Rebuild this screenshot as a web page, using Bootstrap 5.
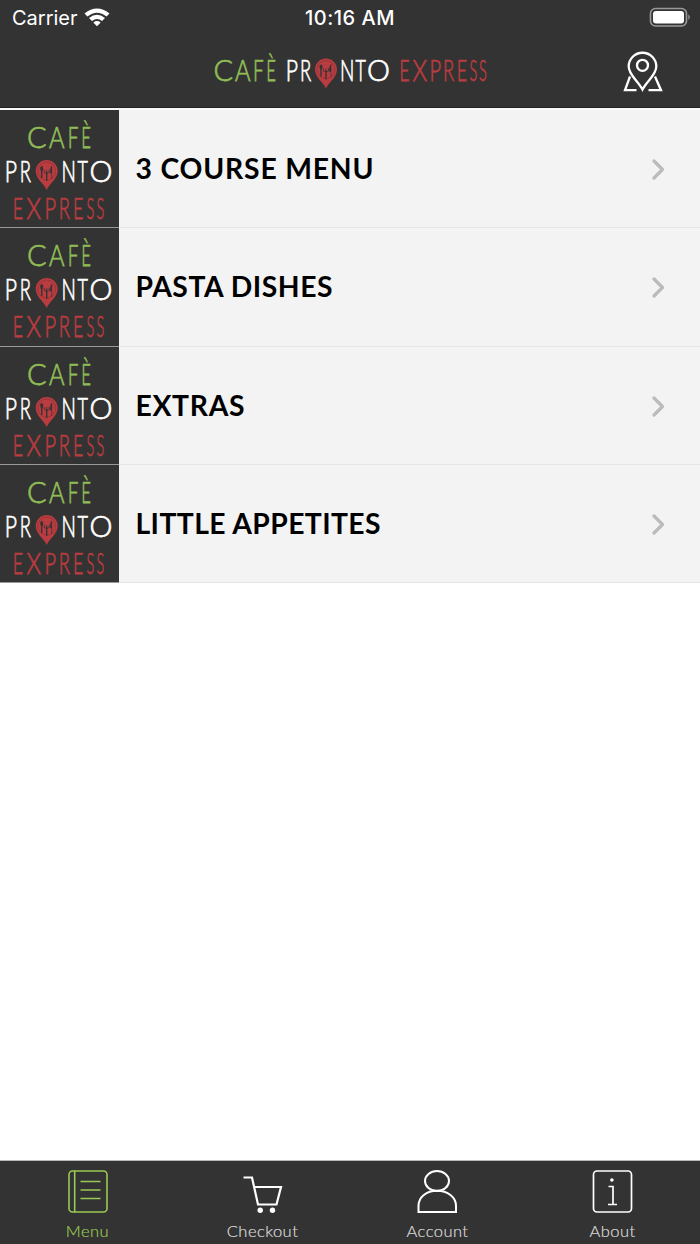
<!DOCTYPE html>
<html lang="en">
<head>
<meta charset="utf-8">
<meta name="viewport" content="width=device-width, initial-scale=1">
<title>Cafè Pronto Express</title>
<link href="https://cdn.jsdelivr.net/npm/bootstrap@5.3.0/dist/css/bootstrap.min.css" rel="stylesheet">
<style>
body{font-family:Lato,sans-serif;background:#fff;overflow:hidden}
.app-dark{background:#333}
.status-bar{height:36px;font-family:Inter,sans-serif;font-size:20px;line-height:36px;color:#fff}
.clock{letter-spacing:.5px}
.carrier{padding-left:12px;margin-right:6px}
.top-bar{height:110px;border-bottom:2px solid #f8f8f8;box-shadow:inset 0 -1px #222}
.title-row{height:72px}
.side{width:214px}
.logo{overflow:visible}
.logo text{font-family:Lato,sans-serif;font-weight:300;font-size:29px;stroke-width:.75}
.cafe{fill:#8fbc55;stroke:#8fbc55}
.pronto{fill:#fff;stroke:#fff}
.express{fill:#b93c40;stroke:#b93c40}
.menu-item{height:118.25px;background:#f3f3f3;border:0;border-radius:0;box-shadow:inset 0 -1px #e6e6e6;color:#000}
.thumb{width:118.5px;height:118.25px;box-shadow:inset 0 -1px #999}
.thumb svg{display:block}
.item-name{font-size:28.3px;font-weight:700;line-height:34px;padding:0 0 2px 17px;white-space:nowrap}
.tab-bar{height:84px;border-top:1px solid #b5bab7}
.tab{color:#ddd;font-size:16.5px;font-weight:300;letter-spacing:.45px;line-height:20px;padding-top:7px;text-decoration:none;-webkit-text-stroke:.2px}
.tab svg{display:block;color:#fff;margin-bottom:7px}
.tab.current,.tab.current svg{color:#9ac953}
</style>
</head>
<body>
<div class="d-flex flex-column vh-100">
<header class="top-bar app-dark flex-shrink-0">
  <div class="status-bar d-flex justify-content-between">
    <div class="side d-flex align-items-center"><span class="carrier">Carrier</span>
      <svg width="26" height="20" viewBox="0 0 26 20" fill="#fff"><path d="M.5 5.5Q13-4.5 25.500 5.500L22.600 8.500Q13 .8 3.400 8.500ZM5 10Q13 3.300 21 10L18 13Q13 8.800 8 13ZM9.300 14.400Q13 11.600 16.700 14.400L13 18.200Z"/></svg></div>
    <div class="fw-medium clock">10:16 AM</div>
    <div class="side d-flex justify-content-end align-items-center"><svg width="52" height="36" viewBox="0 0 52 36"><rect x="2.500" y="8.500" width="36" height="17.500" rx="5" fill="none" stroke="#999" stroke-width="1.600"/><rect x="5" y="11" width="31" height="12.500" rx="3" fill="#fff"/><path d="M40.300 14.300v5.600q3-2.800 0-5.600Z" fill="#999"/></svg></div>
  </div>
  <div class="title-row d-flex justify-content-between">
    <div class="side"></div>
    <svg class="logo" width="272" height="72" viewBox="214 36 272 72" data-words="214.5,80.500 288,80.500 401,80.500"></svg>
    <div class="side d-flex justify-content-end"><svg width="80" height="72" viewBox="620.5 36 80 72" fill="none" stroke="#fff" stroke-width="2.300"><path d="M643 89.500C638 80 629.200 75 629.200 66.500a13.800 13.800 0 0 1 27.600 0C656.800 75 648 80 643 89.500Z"/><circle cx="643" cy="65.300" r="5.500"/><path d="M630.500 76.500 625.500 90.200H637M655.500 76.500 661.500 90.200H649"/></svg></div>
  </div>
</header>
<main class="list-group list-group-flush flex-grow-1">
  <a class="menu-item d-flex align-items-center text-decoration-none" href="#"><div class="thumb app-dark"></div><span class="item-name flex-grow-1" data-w="235">3 COURSE MENU</span></a>
  <a class="menu-item d-flex align-items-center text-decoration-none" href="#"><div class="thumb app-dark"></div><span class="item-name flex-grow-1" data-w="195">PASTA DISHES</span></a>
  <a class="menu-item d-flex align-items-center text-decoration-none" href="#"><div class="thumb app-dark"></div><span class="item-name flex-grow-1" data-w="106">EXTRAS</span></a>
  <a class="menu-item d-flex align-items-center text-decoration-none" href="#"><div class="thumb app-dark"></div><span class="item-name flex-grow-1" data-w="243">LITTLE APPETITES</span></a>
</main>
<nav class="tab-bar app-dark d-flex flex-shrink-0">
  <a class="tab current col-3 d-flex flex-column align-items-center" href="#"><svg width="42" height="46" viewBox="0 0 42 46" fill="none" stroke="currentColor" stroke-width="1.600"><rect x="2" y="3" width="38" height="41" rx="3.500"/><path d="M7.700 3v41M13.500 13.500h20M13.500 22h20M13.500 30.500h20"/></svg><span>Menu</span></a>
  <a class="tab col-3 d-flex flex-column align-items-center" href="#"><svg width="42" height="46" viewBox="0 0 42 46" fill="none" stroke="currentColor" stroke-width="2.200"><path d="M1.500 9.500h8.500l6 27h18.500l4.500-17.500H12.500"/><g fill="currentColor" stroke="none"><circle cx="18.200" cy="42.300" r="2.700"/><circle cx="30.500" cy="42.300" r="2.700"/></g></svg><span>Checkout</span></a>
  <a class="tab col-3 d-flex flex-column align-items-center" href="#"><svg width="42" height="46" viewBox="0.5 0 42 46" fill="none" stroke="currentColor" stroke-width="2"><ellipse cx="20.500" cy="13" rx="12" ry="10"/><path d="M2 44V38C2 29 10 22.800 20.500 22.800S39.500 29 39.500 38v6Z"/></svg><span>Account</span></a>
  <a class="tab col-3 d-flex flex-column align-items-center" href="#"><svg width="42" height="46" viewBox="0 0 42 46" fill="none" stroke="currentColor" stroke-width="1.700"><rect x="1.500" y="3" width="38" height="41" rx="3.500"/><path d="M16.500 18.500h4.500v18M16 36.500h9"/><circle cx="19.900" cy="12" r="1.800" fill="currentColor" stroke="none"/></svg><span>About</span></a>
</nav>
</div>
<script src="https://cdn.jsdelivr.net/npm/bootstrap@5.3.0/dist/js/bootstrap.bundle.min.js"></script>
<script>
// Letter ink: [character, left edge, ink width], relative to the word's left edge.
const words=[
  ['cafe',[['C',0,18],['A',20.500,15.500],['F',40.500,8.500],['È',53.500,7.500]]],
  ['pronto',[['P',0,9.5],['R',14,9.5]]],
  ['pronto',[['N',54,10.500],['T',67.500,10.500],['O',80,21]]],
  ['express',[['E',0,8],['X',11.500,14.500],['P',30.500,9],['R',44,9.500],['E',57.500,8],['S',69,6.500],['S',78.500,6.500]]]
];
const ctx=document.createElement('canvas').getContext('2d');
function word([cls,letters],x,y,stretch=1){
  ctx.font='300 29px Lato';
  return `<text class="${cls}" y="${y}">`+letters.map(([c,l,w])=>{
    const m=ctx.measureText(c),ink=m.actualBoundingBoxRight+m.actualBoundingBoxLeft,k=w/ink;
    return `<tspan x="${(x+l*stretch+m.actualBoundingBoxLeft*k).toFixed(2)}" textLength="${(m.width*k).toFixed(2)}" lengthAdjust="spacingAndGlyphs">${c}</tspan>`;
  }).join('')+'</text>';
}
function pin(x,y,stretch=1){
  return `<g transform="translate(${x+38*stretch} ${y-10})"><path d="M0 18C-3 11-11 7-11-1A11 11 0 0 1 11-1C11 7 3 11 0 18Z" fill="#b93c40"/><circle cy="-1" r="9" fill="none" stroke="#8f3437" stroke-width=".8"/><g stroke="#333" fill="none" stroke-width="1.300"><path d="M-5-2V6M0 0V9"/><path d="M-2.500-2v2.500q2.500 2 5 0V-2M0-2v3" stroke-width=".8"/><path d="M5 7V-6Q3-3 3.500 1H5" fill="#333" stroke-width=".6"/><ellipse cx="-5" cy="-3.500" rx="1.500" ry="2.500" fill="#333" stroke="none"/></g></g>`;
}
function logo(svg,places){
  const [a,b,c]=places;
  svg.innerHTML=word(words[0],...a)+word(words[1],...b)+pin(...b)+word(words[2],...b)+word(words[3],...c);
}
document.querySelectorAll('svg[data-words]').forEach(s=>logo(s,s.dataset.words.split(' ').map(p=>p.split(',').map(Number))));
document.querySelectorAll('.thumb').forEach(t=>{
  t.innerHTML='<svg class="logo" width="118" height="117" viewBox="0 0 118 117"></svg>';
  logo(t.firstChild,[[28,38,1.03],[7,72,1.045],[14.5,108.5,1.05]]);
});
// Even out the tracking of each title to its set width.
document.querySelectorAll('.item-name').forEach(n=>{
  ctx.font='700 28.3px Lato';
  n.style.letterSpacing=((+n.dataset.w+3-ctx.measureText(n.textContent).width)/(n.textContent.length-1)).toFixed(2)+'px';
  n.insertAdjacentHTML('afterend','<svg class="flex-shrink-0" width="50" height="24" viewBox="0 0 50 24" fill="none" stroke="#bbb" stroke-width="3.300" stroke-linecap="round" stroke-linejoin="round"><path d="M4 4l8.500 8.500-8.500 8.500"/></svg>');
});
</script>
</body>
</html>
